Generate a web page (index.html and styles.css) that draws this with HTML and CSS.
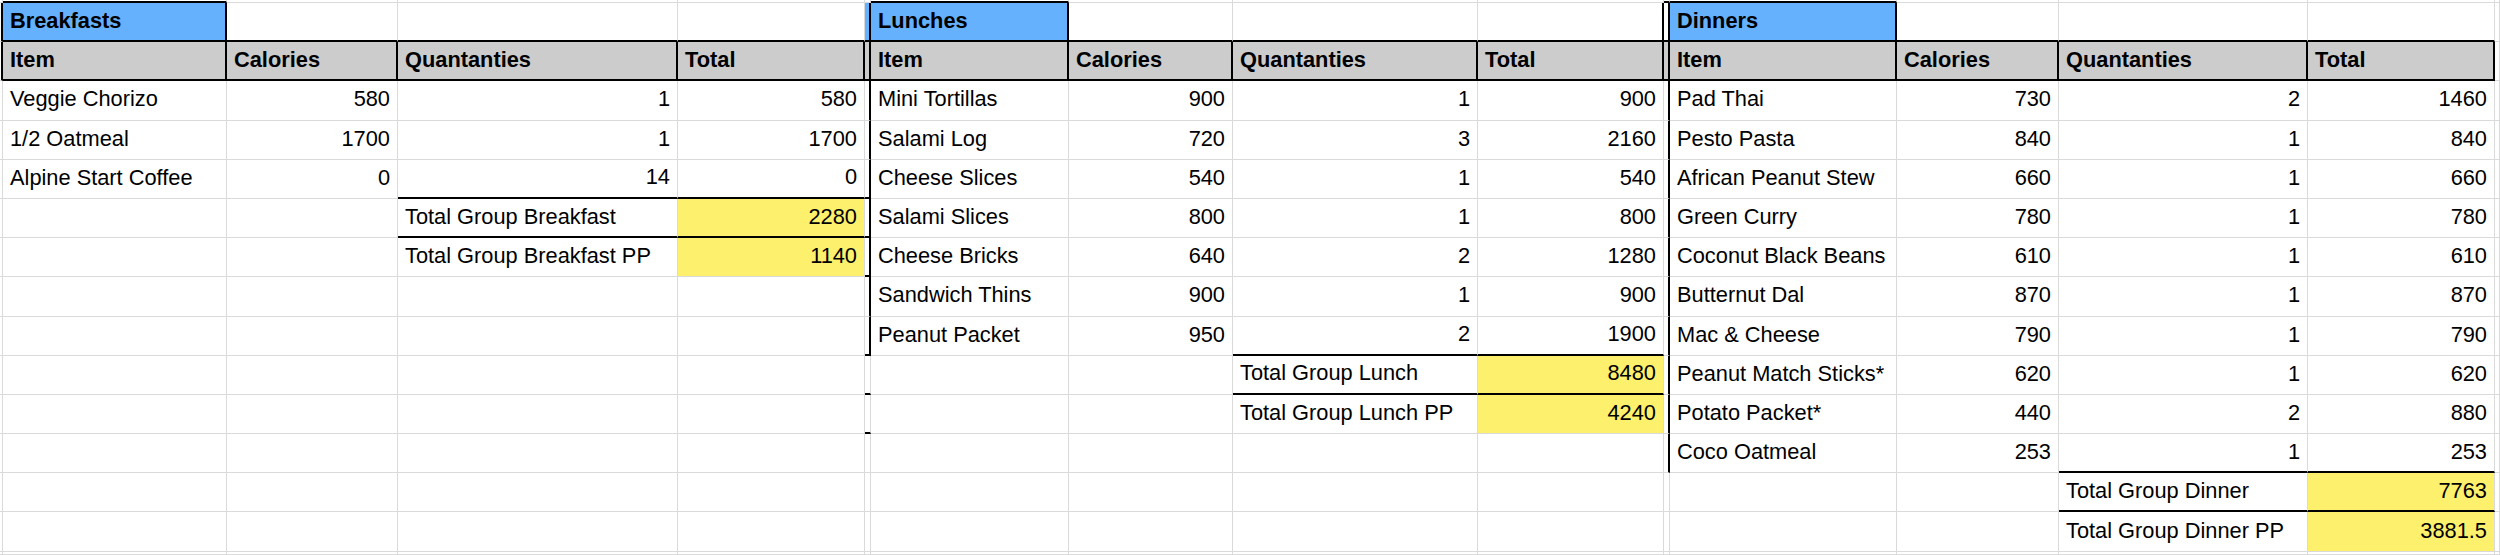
FILE: index.html
```html
<!DOCTYPE html>
<html lang="en">
<head>
<meta charset="utf-8">
<title>Meal Calories</title>
<link rel="stylesheet" href="styles.css">
</head>
<body>
<div class="sheet">
  <!-- row 0 (partial) -->
  <div class="c"></div>
  <div class="c kb"></div><div class="c"></div><div class="c"></div><div class="c"></div>
  <div class="c"></div>
  <div class="c kb"></div><div class="c"></div><div class="c"></div><div class="c"></div>
  <div class="c kb"></div>
  <div class="c kb"></div><div class="c"></div><div class="c"></div><div class="c"></div>
  <div class="c"></div>

  <!-- row 1: titles -->
  <div class="c kr"></div>
  <div class="c t blue b kr kb">Breakfasts</div><div class="c kb"></div><div class="c kb"></div><div class="c kb"></div>
  <div class="c blue kr kb"></div>
  <div class="c t blue b kr kb">Lunches</div><div class="c kb"></div><div class="c kb"></div><div class="c kb kr"></div>
  <div class="c kr kb"></div>
  <div class="c t blue b kr kb">Dinners</div><div class="c kb"></div><div class="c kb"></div><div class="c kb"></div>
  <div class="c"></div>

  <!-- row 2: headers -->
  <div class="c kr"></div>
  <div class="c t hdr kr kb">Item</div><div class="c t hdr kr kb">Calories</div><div class="c t hdr kr kb">Quantanties</div><div class="c t hdr kr kb">Total</div>
  <div class="c hdr kr kb"></div>
  <div class="c t hdr kr kb">Item</div><div class="c t hdr kr kb">Calories</div><div class="c t hdr kr kb">Quantanties</div><div class="c t hdr kr kb">Total</div>
  <div class="c hdr kr kb"></div>
  <div class="c t hdr kr kb">Item</div><div class="c t hdr kr kb">Calories</div><div class="c t hdr kr kb">Quantanties</div><div class="c t hdr kr kb">Total</div>
  <div class="c"></div>

  <!-- row 3 -->
  <div class="c"></div>
  <div class="c t">Veggie Chorizo</div><div class="c t r">580</div><div class="c t r">1</div><div class="c t r">580</div>
  <div class="c kr"></div>
  <div class="c t">Mini Tortillas</div><div class="c t r">900</div><div class="c t r">1</div><div class="c t r">900</div>
  <div class="c kr"></div>
  <div class="c t">Pad Thai</div><div class="c t r">730</div><div class="c t r">2</div><div class="c t r">1460</div>
  <div class="c"></div>

  <!-- row 4 -->
  <div class="c"></div>
  <div class="c t">1/2 Oatmeal</div><div class="c t r">1700</div><div class="c t r">1</div><div class="c t r">1700</div>
  <div class="c kr"></div>
  <div class="c t">Salami Log</div><div class="c t r">720</div><div class="c t r">3</div><div class="c t r">2160</div>
  <div class="c kr"></div>
  <div class="c t">Pesto Pasta</div><div class="c t r">840</div><div class="c t r">1</div><div class="c t r">840</div>
  <div class="c"></div>

  <!-- row 5 -->
  <div class="c"></div>
  <div class="c t">Alpine Start Coffee</div><div class="c t r">0</div><div class="c t r kb">14</div><div class="c t r kb">0</div>
  <div class="c kr kb"></div>
  <div class="c t">Cheese Slices</div><div class="c t r">540</div><div class="c t r">1</div><div class="c t r">540</div>
  <div class="c kr"></div>
  <div class="c t">African Peanut Stew</div><div class="c t r">660</div><div class="c t r">1</div><div class="c t r">660</div>
  <div class="c"></div>

  <!-- row 6 -->
  <div class="c"></div>
  <div class="c"></div><div class="c"></div><div class="c t kb">Total Group Breakfast</div><div class="c t r yel kb">2280</div>
  <div class="c kr kb"></div>
  <div class="c t">Salami Slices</div><div class="c t r">800</div><div class="c t r">1</div><div class="c t r">800</div>
  <div class="c kr"></div>
  <div class="c t">Green Curry</div><div class="c t r">780</div><div class="c t r">1</div><div class="c t r">780</div>
  <div class="c"></div>

  <!-- row 7 -->
  <div class="c"></div>
  <div class="c"></div><div class="c"></div><div class="c t">Total Group Breakfast PP</div><div class="c t r yel">1140</div>
  <div class="c kr kb"></div>
  <div class="c t">Cheese Bricks</div><div class="c t r">640</div><div class="c t r">2</div><div class="c t r">1280</div>
  <div class="c kr"></div>
  <div class="c t">Coconut Black Beans</div><div class="c t r">610</div><div class="c t r">1</div><div class="c t r">610</div>
  <div class="c"></div>

  <!-- row 8 -->
  <div class="c"></div>
  <div class="c"></div><div class="c"></div><div class="c"></div><div class="c"></div>
  <div class="c kr"></div>
  <div class="c t">Sandwich Thins</div><div class="c t r">900</div><div class="c t r">1</div><div class="c t r">900</div>
  <div class="c kr"></div>
  <div class="c t">Butternut Dal</div><div class="c t r">870</div><div class="c t r">1</div><div class="c t r">870</div>
  <div class="c"></div>

  <!-- row 9 -->
  <div class="c"></div>
  <div class="c"></div><div class="c"></div><div class="c"></div><div class="c"></div>
  <div class="c kr kb"></div>
  <div class="c t">Peanut Packet</div><div class="c t r">950</div><div class="c t r kb">2</div><div class="c t r kb">1900</div>
  <div class="c kr"></div>
  <div class="c t">Mac &amp; Cheese</div><div class="c t r">790</div><div class="c t r">1</div><div class="c t r">790</div>
  <div class="c"></div>

  <!-- row 10 -->
  <div class="c"></div>
  <div class="c"></div><div class="c"></div><div class="c"></div><div class="c"></div>
  <div class="c kb"></div>
  <div class="c"></div><div class="c"></div><div class="c t kb">Total Group Lunch</div><div class="c t r yel kb">8480</div>
  <div class="c kr"></div>
  <div class="c t">Peanut Match Sticks*</div><div class="c t r">620</div><div class="c t r">1</div><div class="c t r">620</div>
  <div class="c"></div>

  <!-- row 11 -->
  <div class="c"></div>
  <div class="c"></div><div class="c"></div><div class="c"></div><div class="c"></div>
  <div class="c kb"></div>
  <div class="c"></div><div class="c"></div><div class="c t">Total Group Lunch PP</div><div class="c t r yel">4240</div>
  <div class="c kr"></div>
  <div class="c t">Potato Packet*</div><div class="c t r">440</div><div class="c t r">2</div><div class="c t r">880</div>
  <div class="c"></div>

  <!-- row 12 -->
  <div class="c"></div>
  <div class="c"></div><div class="c"></div><div class="c"></div><div class="c"></div>
  <div class="c"></div>
  <div class="c"></div><div class="c"></div><div class="c"></div><div class="c"></div>
  <div class="c kr"></div>
  <div class="c t">Coco Oatmeal</div><div class="c t r">253</div><div class="c t r kb">1</div><div class="c t r kb">253</div>
  <div class="c"></div>

  <!-- row 13 -->
  <div class="c"></div>
  <div class="c"></div><div class="c"></div><div class="c"></div><div class="c"></div>
  <div class="c"></div>
  <div class="c"></div><div class="c"></div><div class="c"></div><div class="c"></div>
  <div class="c"></div>
  <div class="c"></div><div class="c"></div><div class="c t kb">Total Group Dinner</div><div class="c t r yel kb">7763</div>
  <div class="c"></div>

  <!-- row 14 -->
  <div class="c"></div>
  <div class="c"></div><div class="c"></div><div class="c"></div><div class="c"></div>
  <div class="c"></div>
  <div class="c"></div><div class="c"></div><div class="c"></div><div class="c"></div>
  <div class="c"></div>
  <div class="c"></div><div class="c"></div><div class="c t">Total Group Dinner PP</div><div class="c t r yel">3881.5</div>
  <div class="c"></div>

  <!-- row 15 (partial) -->
  <div class="c"></div>
  <div class="c"></div><div class="c"></div><div class="c"></div><div class="c"></div>
  <div class="c"></div>
  <div class="c"></div><div class="c"></div><div class="c"></div><div class="c"></div>
  <div class="c"></div>
  <div class="c"></div><div class="c"></div><div class="c"></div><div class="c"></div>
  <div class="c"></div>
</div>
</body>
</html>
```

FILE: styles.css
```css
* {
  box-sizing: border-box;
}

html,
body {
  margin: 0;
  padding: 0;
  background: #ffffff;
}

body {
  font-family: "Liberation Sans", Arial, Helvetica, sans-serif;
  font-size: 21.8px;
  color: #000000;
}

.sheet {
  display: grid;
  width: 2500px;
  height: 555px;
  overflow: hidden;
  grid-template-columns: 3px 224px 171px 280px 187px 6px 198px 164px 245px 186px 6px 227px 162px 249px 187px 5px;
  grid-template-rows: 3px repeat(14, 39.2px) 1fr;
}

.c {
  min-width: 0;
  min-height: 0;
  overflow: hidden;
  white-space: nowrap;
  border-right: 1px solid #dadada;
  border-bottom: 1px solid #dadada;
  display: flex;
  align-items: center;
}

.t {
  padding: 0 7px 2px 7px;
}

.r {
  justify-content: flex-end;
}

.b {
  font-weight: bold;
}

.blue {
  background: #66b1fd;
}

.hdr {
  background: #cccccc;
  font-weight: bold;
}

.yel {
  background: #fdf06c;
}

.kr {
  border-right: 2px solid #000000;
}

.kb {
  border-bottom: 2px solid #000000;
}
```
